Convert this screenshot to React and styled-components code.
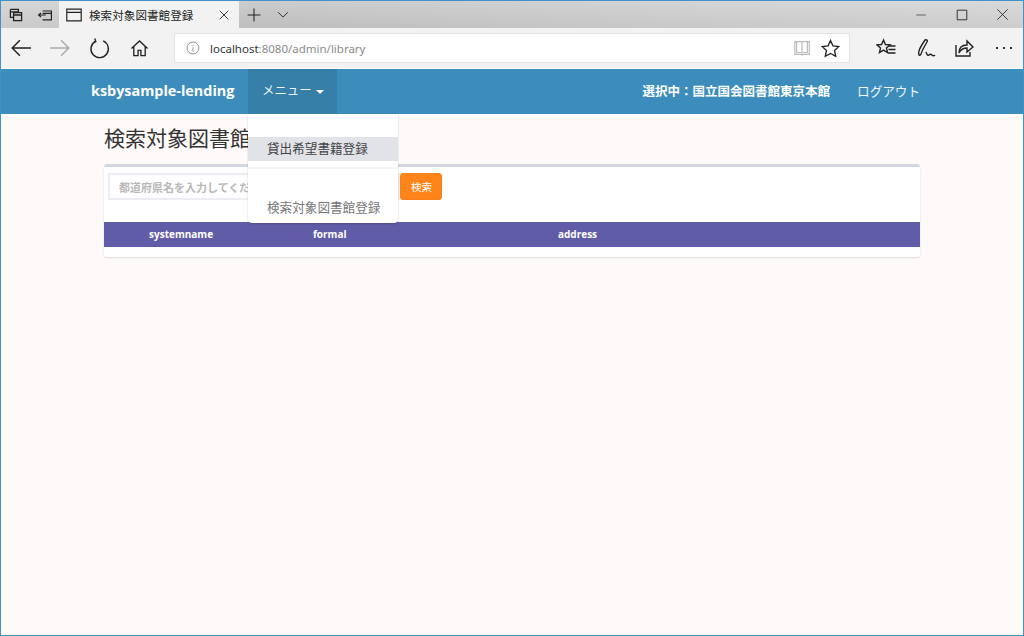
import React from 'react';
import styled, { createGlobalStyle } from 'styled-components';

const JP = '"Noto Sans CJK JP", "Noto Sans", sans-serif';

const GlobalStyle = createGlobalStyle`
  html, body { margin: 0; padding: 0; height: 100%; }
  body { background: #fffafa; font-family: ${JP}; overflow: hidden; }
  * { box-sizing: border-box; }
`;

const Icon = ({ size = 20, w = 1.3, color = '#222', children }) => (
  <svg width={size} height={size} viewBox="0 0 20 20" fill="none" stroke={color} strokeWidth={w}>
    {children}
  </svg>
);

// Browser chrome

const Frame = styled.div`
  width: 1024px;
  height: 636px;
  border: 1px solid #3f93c6;
  display: flex;
  flex-direction: column;
  background: #fffafa;
`;

const TitleBar = styled.div`
  height: 27px;
  display: flex;
  align-items: stretch;
  background:
    linear-gradient(180deg, rgba(255, 255, 255, 0.12), rgba(0, 0, 0, 0.03)),
    linear-gradient(90deg, #d2d2d2 0%, #c4c4c4 25%, #cfcfcf 70%, #d4d4d4 100%);
`;

const TabTool = styled.div`
  width: ${p => p.$w}px;
  display: flex;
  align-items: center;
  justify-content: center;
`;

const Tab = styled.div`
  width: 180px;
  display: flex;
  align-items: center;
  padding: 0 8px 0 6px;
  gap: 6px;
  background: #f2f2f2;
  font-size: 11.5px;
  color: #222;
  letter-spacing: 0.1px;
`;

const TabTitle = styled.span`
  flex: 1;
`;

const Spacer = styled.div`
  flex: 1;
`;

const ToolBar = styled.div`
  height: 40px;
  display: flex;
  align-items: center;
  background: #f2f2f2;
`;

const NavButton = styled.div`
  width: ${p => p.$w || 40}px;
  display: flex;
  align-items: center;
  justify-content: center;
`;

const AddressBox = styled.div`
  width: 676px;
  height: 30px;
  margin: 0 14px 0 15px;
  display: flex;
  align-items: center;
  background: #fff;
  border: 1px solid #e4e4e4;
  padding: 0 4px 0 11px;
  font-family: "Noto Sans", sans-serif;
  font-size: 11.5px;
`;

const Host = styled.span`
  color: #333;
  margin-left: 10px;
`;

const Rest = styled.span`
  color: #8a8a8a;
  flex: 1;
`;

// Page

const Navbar = styled.nav`
  height: 45px;
  margin-top: 1px;
  background: #3c8dbc;
  display: flex;
  align-items: stretch;
  padding: 0 103px 0 90px;
  color: #fff;
`;

const Brand = styled.div`
  display: flex;
  align-items: center;
  padding-bottom: 2px;
  font-family: "Open Sans", "Noto Sans", sans-serif;
  font-weight: 700;
  font-size: 14.4px;
  width: 157px;
`;

const MenuWrap = styled.div`
  position: relative;
  width: 89px;
`;

const MenuToggle = styled.div`
  height: 100%;
  background: #367fa9;
  display: flex;
  align-items: center;
  padding: 0 0 3px 14px;
  gap: 4px;
  font-size: 12.4px;
  color: #f0f5f8;
`;

const Caret = styled.span`
  width: 0;
  height: 0;
  border-left: 4px solid transparent;
  border-right: 4px solid transparent;
  border-top: 4px solid #fff;
  margin-top: 3px;
`;

const Dropdown = styled.div`
  position: absolute;
  top: 45px;
  left: 0;
  width: 150px;
  height: 109px;
  background: #fff;
  border-radius: 0 0 4px 4px;
  box-shadow: 0 1px 2px rgba(0, 0, 0, 0.2);
  padding-top: 23px;
  z-index: 5;
`;

const DropItem = styled.div`
  height: 24px;
  display: flex;
  align-items: center;
  padding: 0 0 3px 19px;
  font-size: 12.6px;
  color: ${p => (p.$active ? '#444' : '#777')};
  background: ${p => (p.$active ? '#e1e3e9' : 'transparent')};
`;

const Divider = styled.div`
  height: 2px;
  background: #f4f4f4;
  margin: 6px 0 27px;
`;

const NavRight = styled.div`
  margin-left: auto;
  display: flex;
  align-items: center;
  gap: 27px;
  padding-bottom: 3px;
`;

const Selected = styled.span`
  font-weight: 700;
  font-size: 12.5px;
`;

const Logout = styled.span`
  font-size: 12.6px;
  color: #f0f5f8;
`;

const Content = styled.main`
  padding: 0 103px;
`;

const Heading = styled.h1`
  margin: 0;
  height: 50px;
  display: flex;
  align-items: center;
  padding-bottom: 4px;
  font-weight: 400;
  font-size: 21px;
  color: #333;
`;

const Card = styled.section`
  background: #fff;
  border-top: 3px solid #d2d6de;
  border-radius: 3px;
  box-shadow: 0 1px 2px rgba(0, 0, 0, 0.12);
  height: 93px;
`;

const SearchRow = styled.div`
  display: flex;
  height: 55px;
  padding: 6px 4px 0;
`;

const SearchInput = styled.input`
  width: 292px;
  height: 27px;
  border: 2px solid #ebedf2;
  padding: 0 9px;
  font-family: ${JP};
  font-size: 11px;
  font-weight: 700;
  outline: none;
  &::placeholder { color: #b8b8b8; opacity: 1; }
`;

const SearchButton = styled.button`
  width: 42px;
  height: 27px;
  border: 1px solid #fa811a;
  border-radius: 3px;
  background: #ff851b;
  color: #fff;
  font-family: ${JP};
  font-size: 10.5px;
  padding: 0 0 0 1px;
`;

const HeadRow = styled.div`
  height: 25px;
  padding-bottom: 1px;
  background: #605ca8;
  display: grid;
  grid-template-columns: 155px 245px 1fr;
  align-items: center;
  color: #fff;
  font-family: "Open Sans", "Noto Sans", sans-serif;
  font-weight: 700;
  font-size: 10px;
`;

const HeadCell = styled.div`
  padding-left: ${p => p.$pad}px;
`;

export default function App() {
  return (
    <>
      <GlobalStyle />
      <Frame>
        <TitleBar>
          <TabTool $w={29}>
            <Icon size={16} w={1.6}>
              <path d="M3 3h10v4M3 3v10h4M7 7h10v10H7zM7 10h10M3 6h10" />
            </Icon>
          </TabTool>
          <TabTool $w={29}>
            <Icon size={16} w={1.5}>
              <path d="M7 5h11v11H7M7 8h11M2 10h9M5 7.500l-3 2.500 3 2.500" />
            </Icon>
          </TabTool>
          <Tab>
            <Icon size={18}>
              <path d="M2 3.500h16v13H2zM2 7h16" />
            </Icon>
            <TabTitle>検索対象図書館登録</TabTitle>
            <Icon size={14}>
              <path d="M4 4l12 12M16 4L4 16" />
            </Icon>
          </Tab>
          <TabTool $w={30}>
            <Icon size={16}>
              <path d="M10 2v16M2 10h16" />
            </Icon>
          </TabTool>
          <TabTool $w={28}>
            <Icon size={14}>
              <path d="M3 6l7 7 7-7" />
            </Icon>
          </TabTool>
          <Spacer />
          <TabTool $w={41}>
            <Icon size={12} w={2} color="#777">
              <path d="M2 10h16" />
            </Icon>
          </TabTool>
          <TabTool $w={41}>
            <Icon size={12} w={1.5}>
              <path d="M2 2h16v16H2z" />
            </Icon>
          </TabTool>
          <TabTool $w={41}>
            <Icon size={13}>
              <path d="M2 2l16 16M18 2L2 18" />
            </Icon>
          </TabTool>
        </TitleBar>
        <ToolBar>
          <NavButton $w={40}>
            <Icon size={22}>
              <path d="M19 10H2M9 3l-7 7 7 7" />
            </Icon>
          </NavButton>
          <NavButton $w={38}>
            <Icon size={22} color="#aaa">
              <path d="M1 10h17M11 3l7 7-7 7" />
            </Icon>
          </NavButton>
          <NavButton $w={40}>
            <Icon size={21}>
              <path d="M6 3.200A8.300 8.300 0 1 0 13.500 2.800M5.500 0.500L6.500 3.500L3.500 5" />
            </Icon>
          </NavButton>
          <NavButton $w={40}>
            <Icon size={19} w={1.4}>
              <path d="M1.500 10L10 2l8.500 8M4 8v9.500h4.500V12h3v5.500H16V8" />
            </Icon>
          </NavButton>
          <AddressBox>
            <Icon size={14} w={1} color="#666">
              <circle cx="10" cy="10" r="8.500" />
              <path d="M10 9v6M10 5.500v1.500" />
            </Icon>
            <Host>localhost</Host>
            <Rest>:8080/admin/library</Rest>
            <NavButton $w={27}>
              <Icon size={18} color="#bbb">
                <path d="M2 3h7l1 1 1-1h7v14h-7l-1 1-1-1H2zM10 4v14M4 3v12h5M16 3v12h-5" />
              </Icon>
            </NavButton>
            <NavButton $w={30}>
              <Icon size={19} w={1.4}>
                <path d="M10 1.500l2.600 5.700 6.200.7-4.600 4.200 1.300 6.100L10 15.200l-5.500 3 1.300-6.100L1.200 7.900l6.200-.7z" />
              </Icon>
            </NavButton>
          </AddressBox>
          <NavButton $w={44}>
            <Icon size={20} w={1.4}>
              <path d="M7.500 2l1.900 4.500 4.600.4-3.500 3.100 1 4.500-4-2.400-4 2.400 1-4.500L1 6.900l4.600-.4zM12.500 8h7M12.500 11.500h7M12 15h7.500" />
            </Icon>
          </NavButton>
          <NavButton $w={35}>
            <Icon size={20} w={1.4}>
              <path d="M3 17c-1-3 0-6 6-15 2-1 3 1 2 2-3 5-5 9-6 12-.5 1-1.500 2-2 1zM10 14c1 3 2 4 3 3s2-1 3 0 2 1 3 0" />
            </Icon>
          </NavButton>
          <NavButton $w={42}>
            <Icon size={20} w={1.4}>
              <path d="M2 7v11h14v-4M5 15c0-5 3-8 8-8V3l6 6-6 5v-4c-4 0-6 1-8 5z" />
            </Icon>
          </NavButton>
          <NavButton $w={37}>
            <Icon size={20} w={2} color="#333">
              <path d="M2 10h2M9 10h2M16 10h2" />
            </Icon>
          </NavButton>
        </ToolBar>
        <Navbar>
          <Brand>ksbysample-lending</Brand>
          <MenuWrap>
            <MenuToggle>
              メニュー
              <Caret />
            </MenuToggle>
            <Dropdown>
              <DropItem $active>貸出希望書籍登録</DropItem>
              <Divider />
              <DropItem>検索対象図書館登録</DropItem>
            </Dropdown>
          </MenuWrap>
          <NavRight>
            <Selected>選択中：国立国会図書館東京本館</Selected>
            <Logout>ログアウト</Logout>
          </NavRight>
        </Navbar>
        <Content>
          <Heading>検索対象図書館登録</Heading>
          <Card>
            <SearchRow>
              <SearchInput placeholder="都道府県名を入力してください" />
              <SearchButton>検索</SearchButton>
            </SearchRow>
            <HeadRow>
              <HeadCell $pad={45}>systemname</HeadCell>
              <HeadCell $pad={54}>formal</HeadCell>
              <HeadCell $pad={54}>address</HeadCell>
            </HeadRow>
          </Card>
        </Content>
      </Frame>
    </>
  );
}
